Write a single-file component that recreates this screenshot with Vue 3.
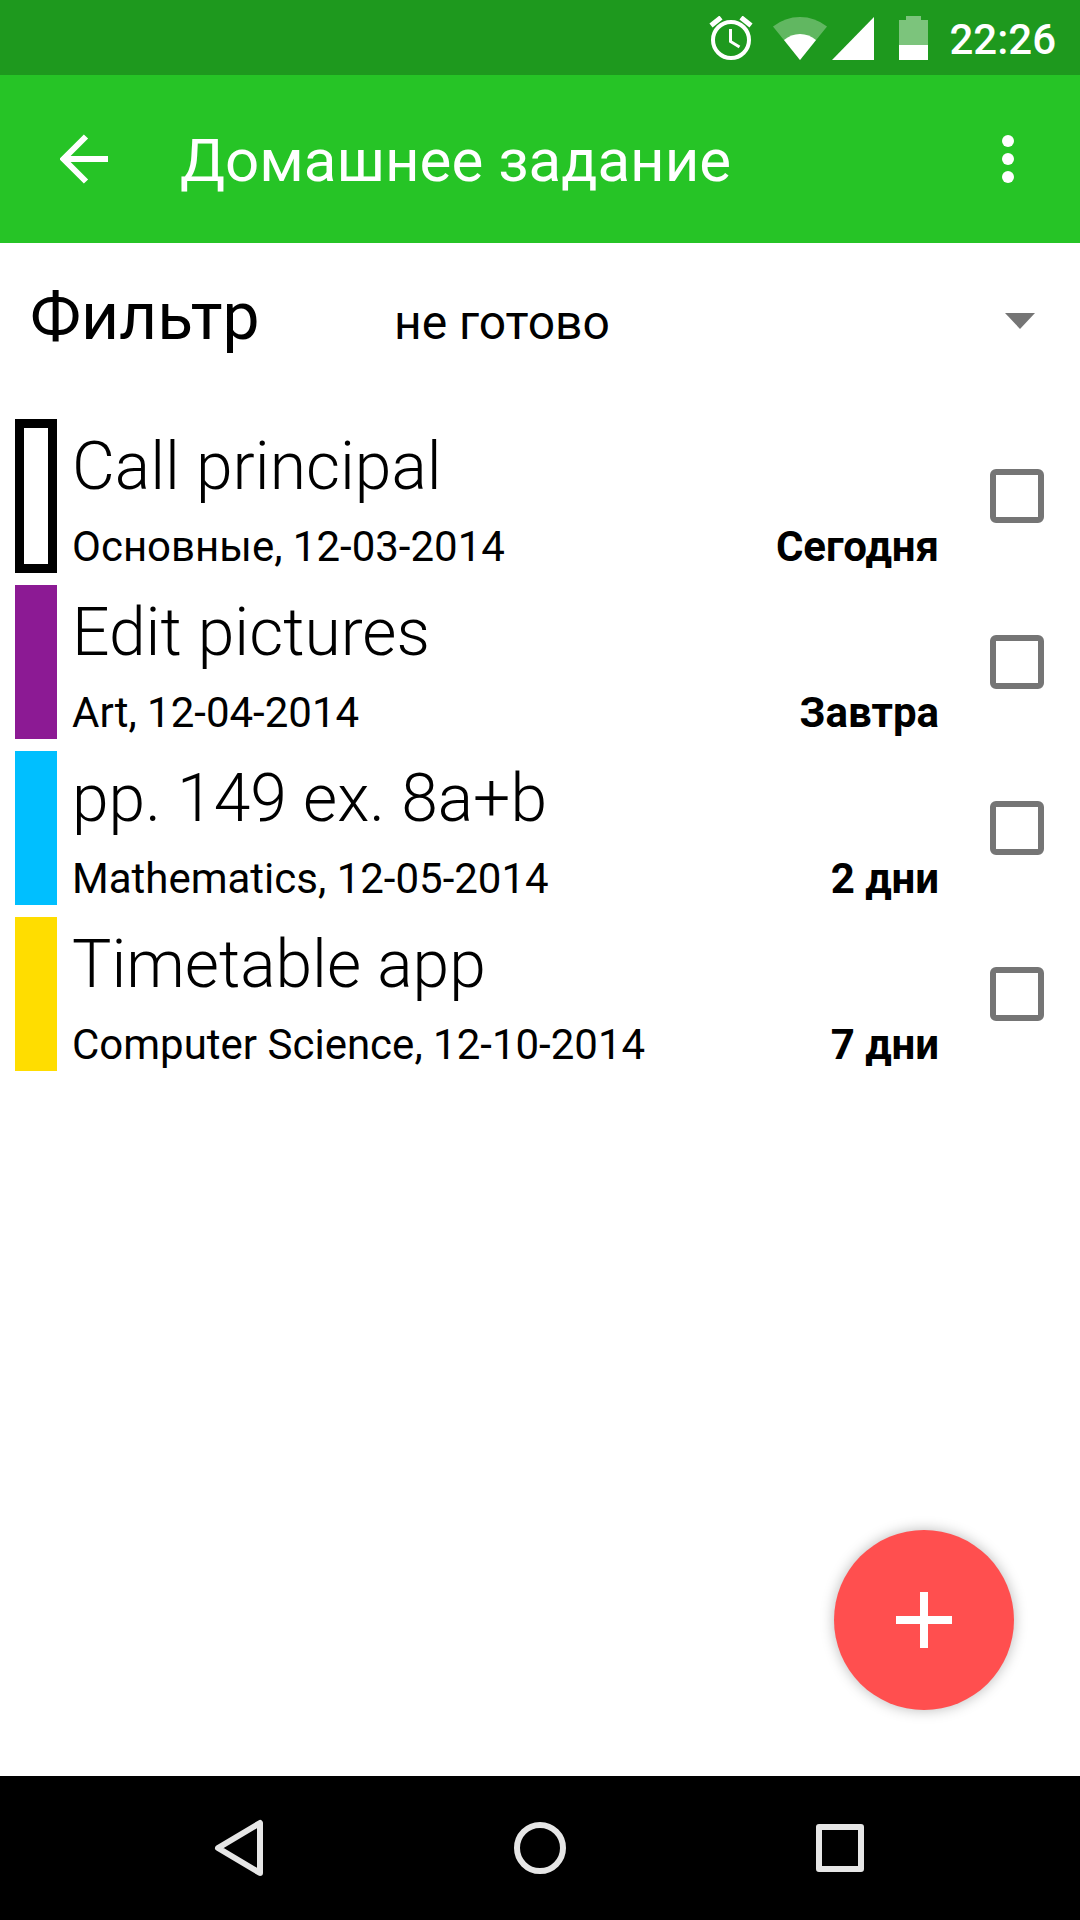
<script setup>
import { ref } from 'vue'

const filter = ref('open')

const tasks = ref([
  { id: 1, title: 'Call principal', subject: 'Основные', date: '12-03-2014', due: 'Сегодня', color: 'outline', done: false },
  { id: 2, title: 'Edit pictures', subject: 'Art', date: '12-04-2014', due: 'Завтра', color: 'purple', done: false },
  { id: 3, title: 'pp. 149 ex. 8a+b', subject: 'Mathematics', date: '12-05-2014', due: '2 дни', color: 'blue', done: false },
  { id: 4, title: 'Timetable app', subject: 'Computer Science', date: '12-10-2014', due: '7 дни', color: 'yellow', done: false }
])
</script>

<template>
  <div class="screen">
    <div class="status-bar">
      <svg class="alarm" width="44" height="44" viewBox="0 0 44 44" fill="none" stroke="#fff">
        <circle cx="22" cy="24" r="18" stroke-width="4" />
        <path d="M21.500 13v12.500l9 5.500" stroke-width="3" />
        <path d="M2 9.500l10-8M42 9.500l-10-8" stroke-width="5" />
      </svg>
      <svg class="wifi" width="54" height="44" viewBox="0 0 54 44" fill="#fff">
        <path d="M0 10.500Q12 1 27 1t27 9.500L27 44z" opacity="0.3" />
        <path d="M11 24q7-6 16-6t16 6L27 44z" />
      </svg>
      <svg class="signal" width="42" height="44" viewBox="0 0 42 44" fill="#fff">
        <path d="M42 1v43H0z" />
      </svg>
      <svg class="battery" width="30" height="44" viewBox="0 0 30 44" fill="#fff">
        <path d="M7 0h15v4h7v25H0V4h7z" opacity="0.42" />
        <path d="M0 29h29v15H0z" />
      </svg>
      <span class="clock">22:26</span>
    </div>

    <header class="toolbar">
      <button class="icon-btn" aria-label="Назад">
        <svg width="48" height="50" viewBox="0 0 48 50" fill="none" stroke="#fff" stroke-width="6">
          <path d="M48 25H4M26 2.500L3.500 25 26 47.500" />
        </svg>
      </button>
      <h1>Домашнее задание</h1>
      <button class="icon-btn" aria-label="Меню">
        <svg width="12" height="48" viewBox="0 0 12 48" fill="#fff">
          <circle cx="6" cy="6" r="6" />
          <circle cx="6" cy="24" r="6" />
          <circle cx="6" cy="42" r="6" />
        </svg>
      </button>
    </header>

    <main>
      <div class="filter">
        <label for="filter">Фильтр</label>
        <div class="select-wrap">
          <select id="filter" v-model="filter">
            <option value="open">не готово</option>
          </select>
          <svg class="arrow" width="30" height="16" viewBox="0 0 30 16" fill="#757575">
            <path d="M0 0h30L15 16z" />
          </svg>
        </div>
      </div>

      <ul class="tasks">
        <li v-for="task in tasks" :key="task.id" class="task">
          <span class="bar" :class="task.color"></span>
          <label class="info" :for="'task-' + task.id">
            <span class="title">{{ task.title }}</span>
            <span class="meta">
              <span>{{ task.subject }}, {{ task.date }}</span>
              <strong>{{ task.due }}</strong>
            </span>
          </label>
          <input :id="'task-' + task.id" v-model="task.done" type="checkbox">
        </li>
      </ul>

      <button class="fab" aria-label="Добавить">
        <svg width="56" height="56" viewBox="0 0 56 56" fill="#fff">
          <path d="M24 0h8v24h24v8H32v24h-8V32H0v-8h24z" />
        </svg>
      </button>
    </main>

    <nav class="nav-bar">
      <button aria-label="Назад">
        <svg width="60" height="60" viewBox="0 0 60 60">
          <path d="M50 5v50L8 30z" />
        </svg>
      </button>
      <button aria-label="Домой">
        <svg width="60" height="60" viewBox="0 0 60 60">
          <circle cx="30" cy="30" r="23" />
        </svg>
      </button>
      <button aria-label="Недавние">
        <svg width="60" height="60" viewBox="0 0 60 60">
          <path d="M9 9h42v42H9z" />
        </svg>
      </button>
    </nav>
  </div>
</template>

<style>
body {
  margin: 0;
  background: #fff;
}
</style>

<style scoped>
.screen {
  display: flex;
  flex-direction: column;
  min-height: 100vh;
  font-family: Roboto, "Noto Sans", sans-serif;
  color: #000;
}

button {
  padding: 0;
  border: none;
  background: transparent;
  cursor: pointer;
}

svg {
  display: block;
}

.status-bar {
  display: flex;
  align-items: center;
  justify-content: flex-end;
  height: 75px;
  padding-right: 24px;
  background: #1e991e;
}

.wifi {
  margin-left: 20px;
}

.signal {
  margin-left: 5px;
}

.battery {
  margin-left: 25px;
}

.clock {
  margin-left: 20px;
  padding-top: 4px;
  color: #fff;
  font-size: 42px;
  font-weight: 500;
  line-height: 48px;
}

.toolbar {
  display: flex;
  align-items: center;
  height: 168px;
  background: #26c426;
}

.toolbar h1 {
  flex: 1;
  margin: 0;
  padding-top: 4px;
  color: #fff;
  font-size: 60px;
  font-weight: 400;
  line-height: 72px;
}

.icon-btn {
  display: flex;
  align-items: center;
  justify-content: center;
  width: 144px;
  height: 144px;
}

.icon-btn:first-child {
  margin: 0 12px 0 12px;
  padding-right: 12px;
  box-sizing: content-box;
}

main {
  position: relative;
  flex: 1;
}

.filter {
  display: flex;
  align-items: baseline;
  padding: 29px 24px 0 30px;
}

.filter label {
  width: 364px;
  font-size: 66px;
  line-height: 90px;
}

.select-wrap {
  position: relative;
  flex: 1;
}

select {
  appearance: none;
  width: 100%;
  height: 96px;
  padding: 0;
  border: none;
  background: transparent;
  color: #000;
  font-family: inherit;
  font-size: 48px;
}

.arrow {
  position: absolute;
  top: 38px;
  right: 21px;
  pointer-events: none;
}

.tasks {
  display: flex;
  flex-direction: column;
  gap: 12px;
  margin: 48px 0 0;
  padding: 0 36px 0 15px;
  list-style: none;
}

.task {
  display: flex;
  align-items: center;
}

.bar {
  align-self: stretch;
  box-sizing: border-box;
  width: 42px;
}

.outline {
  border: 9px solid #000;
}

.purple {
  background: #8c1a94;
}

.blue {
  background: #00bfff;
}

.yellow {
  background: #ffdd00;
}

.info {
  flex: 1;
  padding: 6px 0 2px 15px;
}

.title {
  display: block;
  font-size: 66px;
  font-weight: 300;
  line-height: 84px;
}

.meta {
  display: flex;
  justify-content: space-between;
  padding-top: 14px;
  font-size: 42px;
  line-height: 48px;
}

.meta strong {
  font-weight: 700;
}

input[type="checkbox"] {
  appearance: none;
  width: 54px;
  height: 54px;
  margin: 0 0 0 51px;
  border: 6px solid #757575;
  border-radius: 6px;
}

input[type="checkbox"]:checked {
  background: #757575;
}

.fab {
  position: absolute;
  right: 66px;
  bottom: 66px;
  display: flex;
  align-items: center;
  justify-content: center;
  width: 180px;
  height: 180px;
  border-radius: 50%;
  background: #ff4f4f;
  box-shadow: 0 0 14px rgba(0, 0, 0, 0.28);
}

.nav-bar {
  display: flex;
  justify-content: center;
  gap: 60px;
  height: 144px;
  background: #000;
}

.nav-bar button {
  display: flex;
  align-items: center;
  justify-content: center;
  width: 240px;
}

.nav-bar svg {
  fill: none;
  stroke: #e6e6e6;
  stroke-width: 6;
  stroke-linejoin: round;
}
</style>
